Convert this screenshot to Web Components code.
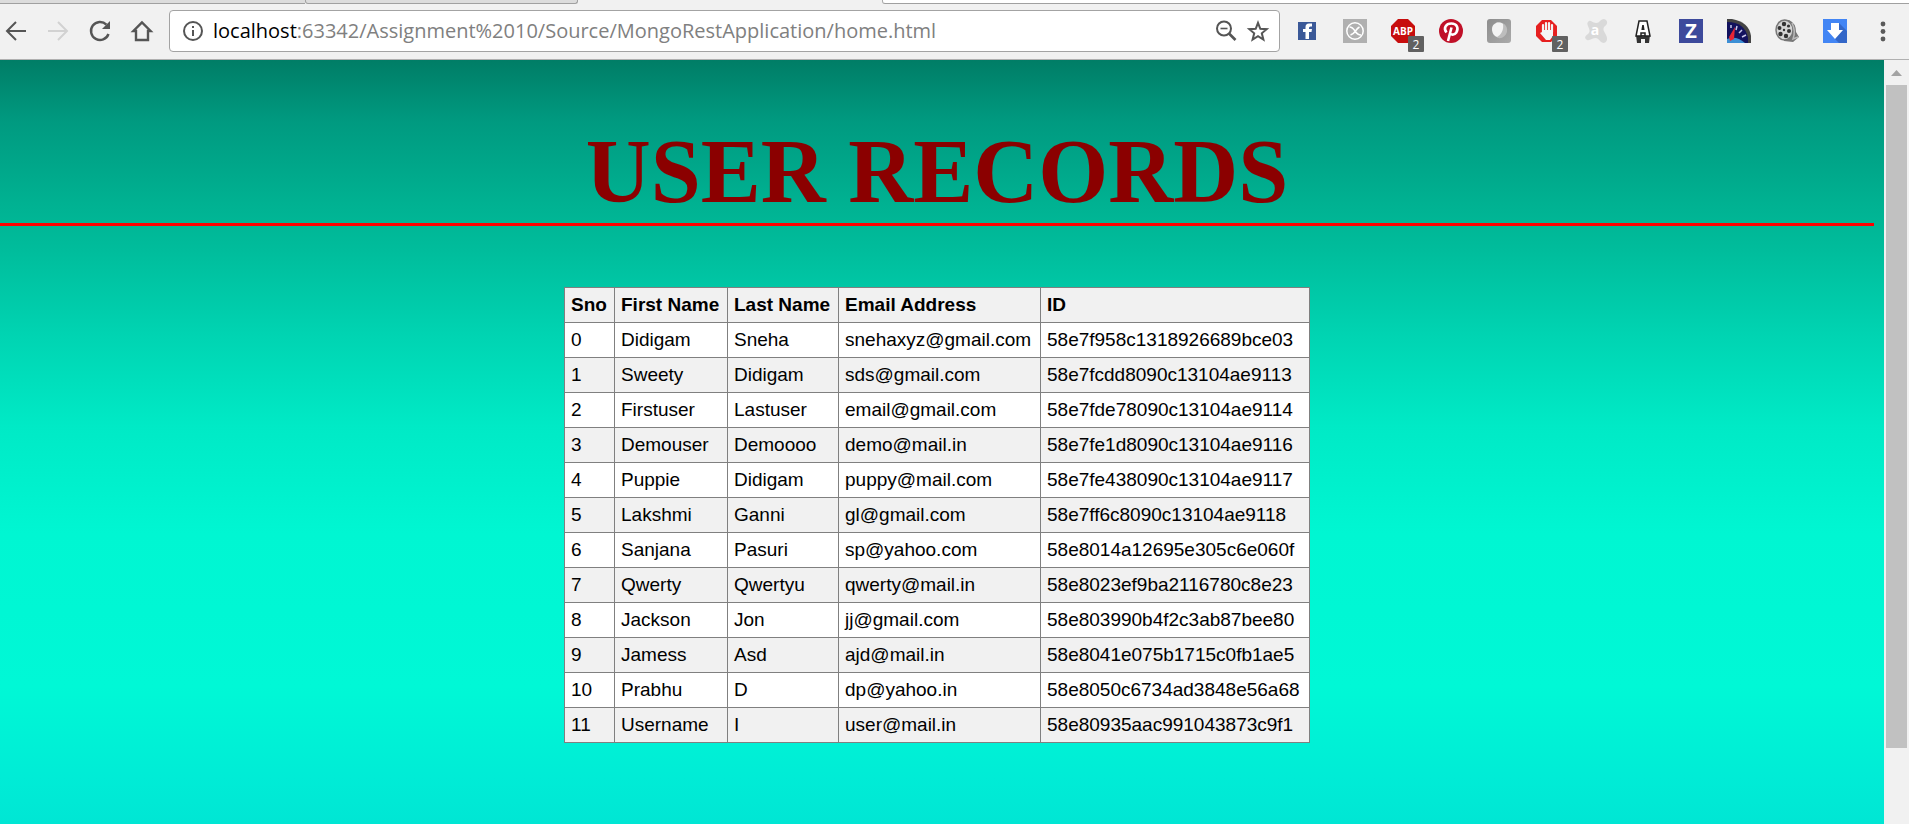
<!DOCTYPE html>
<html lang="en">
<head>
<meta charset="utf-8">
<title>User Records</title>
<style>
html,body{margin:0;height:100%}
body{font-family:"Liberation Sans",Arial,sans-serif;overflow:hidden}
</style>
</head>
<body>
<browser-window>
  <browser-toolbar slot="toolbar" host="localhost" path=":63342/Assignment%2010/Source/MongoRestApplication/home.html"></browser-toolbar>
  <records-page>
    <span slot="title">USER RECORDS</span>
    <records-table></records-table>
  </records-page>
</browser-window>
<script>
function define(name, html, setup) {
  customElements.define(name, class extends HTMLElement {
    constructor() {
      super();
      this.attachShadow({ mode: 'open' }).innerHTML = html;
    }
    connectedCallback() { if (setup) setup(this, this.shadowRoot); }
  });
}

define('ext-button', `
<style>
:host{display:block;width:24px;height:24px;position:relative}
button{all:unset;display:block;width:24px;height:24px}
::slotted(svg){display:block;width:24px;height:24px;overflow:visible}
.badge{position:absolute;left:17px;top:17px;width:16px;height:16px;background:#616161;border-radius:1px;color:#fff;font:12px/17px "Open Sans",sans-serif;text-align:center}
.badge:empty{display:none}
</style>
<button><slot></slot></button><span class="badge"></span>`, (el, root) => {
  root.querySelector('button').setAttribute('aria-label', el.getAttribute('label'));
  root.querySelector('.badge').textContent = el.getAttribute('count') || '';
});

define('browser-toolbar', `
<style>
:host{display:block;background:#f1f1f1}
.tabs{display:grid;grid-template-columns:305px 273px 304px 1fr;height:4px;box-sizing:border-box;background:#f1f1f1}
.tabs i{border-bottom:1px solid #a0a0a0;background:#dcdcdc}
.tabs i:nth-child(2){border-left:1px solid #a0a0a0;border-right:1px solid #a0a0a0;border-radius:0 0 3px 3px;box-sizing:border-box}
.tabs i:nth-child(3){border:0;background:#f1f1f1}
.tabs i:nth-child(4){background:#fff;border-left:1px solid #aaa;border-radius:0 0 0 3px}
.bar{display:flex;align-items:center;box-sizing:border-box;height:56px;padding-bottom:1px;border-bottom:1px solid #b0b0b0}
button{all:unset;display:block}
svg{display:block}
.nav{display:flex;gap:18px;padding:0 15px 0 4px}
.nav svg{width:24px;height:24px}
.address{flex:1;display:flex;align-items:center;gap:8px;box-sizing:border-box;height:42px;border:1px solid #a3a3a3;border-radius:4px;background:#fff;padding:0 9px 0 11px}
.url{flex:1;min-width:0;font:20px/28px "Open Sans","Noto Sans",sans-serif;white-space:nowrap;color:#808080}
.url a{color:inherit;text-decoration:none}
.url b{font-weight:400;color:#000}
.exts{display:flex;gap:24px;padding:0 24px 0 15px}
.menu{padding-right:14px}
</style>
<div class="tabs"><i></i><i></i><i></i><i></i></div>
<div class="bar">
  <div class="nav">
    <button aria-label="Back"><svg viewBox="0 0 24 24" fill="none" stroke="#555" stroke-width="2"><path d="M22 12H4M12 3L3 12l9 9"/></svg></button>
    <button aria-label="Forward"><svg viewBox="0 0 24 24" fill="none" stroke="#d2d2d2" stroke-width="2"><path d="M2 12h18M12 3l9 9-9 9"/></svg></button>
    <button aria-label="Reload"><svg viewBox="0 0 24 24" fill="none" stroke="#555" stroke-width="2.4"><path d="M20.500 15A9 9 0 1 1 18.400 5.600"/><path d="M22 2v8h-8z" fill="#555" stroke="none"/></svg></button>
    <button aria-label="Home"><svg viewBox="0 0 24 24" fill="none" stroke="#555" stroke-width="2.4" ><path d="M12 3.400L3.400 12H6v9h12v-9h2.600z"/></svg></button>
  </div>
  <div class="address">
    <svg width="24" height="24" viewBox="0 0 24 24"><circle cx="12" cy="12" r="9" fill="none" stroke="#555" stroke-width="2"/><path d="M11 7h2v2h-2zM11 11h2v6h-2z" fill="#555"/></svg>
    <div class="url"><a href="#"><b></b><span></span></a></div>
    <button aria-label="Zoom"><svg width="24" height="24" viewBox="0 0 24 24" fill="none" stroke="#555"><circle cx="10" cy="9.500" r="7" stroke-width="2"/><path d="M15 14.500l6.500 6.500" stroke-width="2.600"/><path d="M6.500 9.500h7" stroke-width="1.600"/></svg></button>
    <button aria-label="Bookmark"><svg width="24" height="24" viewBox="0 0 24 24"><path d="M12 3.800l2.300 6 6.400.4-4.900 4.100 1.600 6.200-5.400-3.400-5.400 3.400 1.600-6.200-4.900-4.100 6.400-.4z" fill="none" stroke="#555" stroke-width="2"/></svg></button>
  </div>
  <div class="exts">
    <ext-button label="Facebook"><svg viewBox="0 0 24 24"><path fill="#3b5998" d="M3 3h18v18H3z"/><path fill="#fff" d="M10.500 20v-7H8v-3h2.500V8q0-3.500 3.500-3.500h3v3h-1.600q-1.400 0-1.400 1.500v1h3l-.5 3H14v7z"/></svg></ext-button>
    <ext-button label="Blocker"><svg viewBox="0 0 24 24"><path fill="#b0b0b0" d="M0 0h24v24H0z"/><g fill="none" stroke="#fff" stroke-width="1.500"><circle cx="12" cy="12" r="8.200"/><path d="M6.500 8q3 0 5.500 4t6 4M7.500 16q3-1 5-4t4-4"/></g></svg></ext-button>
    <ext-button label="Adblock Plus" count="2"><svg viewBox="0 0 24 24"><path fill="#c70d0d" d="M7 0h10l7 7v10l-7 7H7l-7-7V7z"/><text x="12" y="16" text-anchor="middle" font-family="Open Sans,sans-serif" font-weight="700" font-size="10" fill="#fff">ABP</text></svg></ext-button>
    <ext-button label="Pinterest"><svg viewBox="0 0 24 24"><circle cx="12" cy="12" r="12" fill="#c01028"/><path d="M7.500 13.500C4 9 7 4.500 12.300 4.500c6 0 7.500 5 5 9-2 3-5.600 2.500-6.300.3M12.500 8.500L9 22" fill="none" stroke="#fff" stroke-width="2.600"/></svg></ext-button>
    <ext-button label="Bubble"><svg viewBox="0 0 24 24"><defs><linearGradient id="g" x2="1" y2="1"><stop stop-color="#8d8d8d"/><stop offset="1" stop-color="#aaa"/></linearGradient></defs><rect width="24" height="24" rx="3" fill="url(#g)"/><path fill="#bdbdbd" d="M9 3.500c7-1 12 3 11 9-1 5-6 8-10 6z"/><path fill="#f3f3f3" d="M5 10c0-6 7-8 11-5 1 6-2 11-6 13-3-1-5-4-5-8z"/></svg></ext-button>
    <ext-button label="AdBlock" count="2"><svg viewBox="0 0 24 24"><path fill="#e62020" d="M7 1h9l6 6v10l-6 6H7l-6-6V7z"/><path d="M8 13V6M11 12V4M14 12V4M17 13V6" fill="none" stroke="#f4f4f4" stroke-width="2.200" stroke-linecap="round"/><path fill="#f4f4f4" d="M7 11h11v6l-3 4h-4l-6-7 2-1z"/></svg></ext-button>
    <ext-button label="Avast"><svg viewBox="0 0 24 24"><path fill="#d9d9d9" d="M6 2c2-1 3 2 7 2 4 0 4-4 8-4 4 1 4 5 1 7-3 3-1 5 1 9 2 4 1 7-2 8-4 0-4-4-8-5-4 0-6 3-9 2-3-2-2-4 1-6 3-3 1-5 0-8-1-2-1-4 1-5z"/><text x="12" y="16" text-anchor="middle" font-family="Open Sans,sans-serif" font-weight="700" font-size="14" fill="#fff">a</text></svg></ext-button>
    <ext-button label="Font tool"><svg viewBox="0 0 24 24"><path fill="#333" d="M5 16h14l-1 8h-4v-4h-4v4H6z"/><path fill="#fff" stroke="#222" stroke-width="1.500" d="M8 2h8l3 15h-5v-3h-4v3H5z"/><path fill="#222" d="M11.200 6h1.600l.8 5h-3.200z"/></svg></ext-button>
    <ext-button label="Zotero"><svg viewBox="0 0 24 24"><path fill="#3d4a9c" d="M0 0h24v24H0z"/><text x="12" y="19" text-anchor="middle" font-family="Open Sans,sans-serif" font-weight="700" font-size="20" fill="#fff">Z</text></svg></ext-button>
    <ext-button label="Speed"><svg viewBox="0 0 24 24"><path fill="#444" d="M0 0h5q17 3 19 17v7H0z"/><path fill="#12125e" d="M0 3q18 0 21 16v5H0z"/><path fill="#3c8fd5" d="M0 24v-4q9-4 18 4z"/><path d="M4 6v3M10 7l-1 4M15 11l-3 3M19 16l-4 2" stroke="#c8c8e8" stroke-width="1.500"/><path fill="#e52535" d="M8 8l-1 12-4 2-1-4z"/></svg></ext-button>
    <ext-button label="Video"><svg viewBox="0 0 24 24"><path fill="#777" d="M8 1h6q7 3 7 12l3 5-6 5-9-1z"/><ellipse cx="9.500" cy="11" rx="8.500" ry="10" fill="#d4d4d4" stroke="#777" stroke-width="1.500"/><g fill="#333"><circle cx="9" cy="5" r="2.200"/><circle cx="4.500" cy="9" r="2"/><circle cx="5.500" cy="15" r="2.200"/><circle cx="11" cy="17" r="2.200"/><circle cx="14" cy="12" r="2"/><circle cx="13.500" cy="7" r="1.600"/><circle cx="9" cy="11" r="1.200"/></g><path d="M17 4q4 8 1 16l5-2" fill="none" stroke="#bbb" stroke-width="1.500"/></svg></ext-button>
    <ext-button label="Downloader"><svg viewBox="0 0 24 24"><path fill="#4285f4" d="M0 0h24v24H0z"/><path fill="#3367c8" d="M16 4l8 8v12H16l-4-4z"/><path fill="#fff" d="M8 4h8v7h4l-8 9-8-9h4z"/></svg></ext-button>
  </div>
  <button class="menu" aria-label="Menu"><svg width="24" height="24" viewBox="0 0 24 24" fill="#5a5a5a"><circle cx="12" cy="5" r="2.400"/><circle cx="12" cy="12.500" r="2.400"/><circle cx="12" cy="20" r="2.400"/></svg></button>
</div>`, (el, root) => {
  root.querySelector('.url b').textContent = el.getAttribute('host');
  root.querySelector('.url span').textContent = el.getAttribute('path');
});

define('browser-window', `
<style>
:host{display:flex;flex-direction:column;height:100vh}
main{flex:1;min-height:0;display:flex}
.view{flex:1;overflow:hidden}
.view ::slotted(*){min-height:100%}
.scroll{width:25px;box-sizing:border-box;background:#f1f1f1;display:flex;flex-direction:column;align-items:stretch;padding:0 2px}
.scroll svg{display:block;width:21px;height:25px}
.thumb{flex:663;background:#c1c1c1}
.rest{flex:76}
</style>
<slot name="toolbar"></slot>
<main><div class="view"><slot></slot></div>
<div class="scroll"><svg viewBox="0 0 21 25"><path d="M5 16l5.500-6 5.500 6z" fill="#a3a3a3"/></svg><div class="thumb"></div><div class="rest"></div></div></main>`);

define('records-page', `
<style>
:host{display:block;box-sizing:border-box;min-height:100%;background:linear-gradient(180deg,#007d66 0,#009a80 8%,#00b292 19%,#00bd9c 25%,#00d4b2 36%,#00eac6 48%,#00f6d2 62%,#00f8d6 82%,#00ecd6 94%,#00e6d4 100%);padding:60px 10px 0 0}
header{border-bottom:3px solid #f00;text-align:center}
h1{margin:0;font:700 90px/103px "Liberation Serif","Times New Roman",serif;color:#8b0000}
.content{display:flex;justify-content:center;padding-top:61px}
</style>
<header><h1><slot name="title"></slot></h1></header>
<div class="content"><slot></slot></div>`);

const columns = [['Sno', 50], ['First Name', 113], ['Last Name', 111], ['Email Address', 202], ['ID', 269]];
const records = [
  ['0', 'Didigam', 'Sneha', 'snehaxyz@gmail.com', '58e7f958c1318926689bce03'],
  ['1', 'Sweety', 'Didigam', 'sds@gmail.com', '58e7fcdd8090c13104ae9113'],
  ['2', 'Firstuser', 'Lastuser', 'email@gmail.com', '58e7fde78090c13104ae9114'],
  ['3', 'Demouser', 'Demoooo', 'demo@mail.in', '58e7fe1d8090c13104ae9116'],
  ['4', 'Puppie', 'Didigam', 'puppy@mail.com', '58e7fe438090c13104ae9117'],
  ['5', 'Lakshmi', 'Ganni', 'gl@gmail.com', '58e7ff6c8090c13104ae9118'],
  ['6', 'Sanjana', 'Pasuri', 'sp@yahoo.com', '58e8014a12695e305c6e060f'],
  ['7', 'Qwerty', 'Qwertyu', 'qwerty@mail.in', '58e8023ef9ba2116780c8e23'],
  ['8', 'Jackson', 'Jon', 'jj@gmail.com', '58e803990b4f2c3ab87bee80'],
  ['9', 'Jamess', 'Asd', 'ajd@mail.in', '58e8041e075b1715c0fb1ae5'],
  ['10', 'Prabhu', 'D', 'dp@yahoo.in', '58e8050c6734ad3848e56a68'],
  ['11', 'Username', 'I', 'user@mail.in', '58e80935aac991043873c9f1']
];
define('records-table', `
<style>
:host{display:block}
table{border-collapse:collapse;font:19px/22px "Liberation Sans",Arial,sans-serif;color:#000}
th,td{border:1px solid #808080;padding:6px;text-align:left;background:#fff;white-space:nowrap}
tr:nth-child(odd)>*{background:#f1f1f1}
</style>
<table></table>`, (el, root) => {
  const row = (cells, tag) => '<tr>' + cells.map(c => `<${tag}>${c}</${tag}>`).join('') + '</tr>';
  root.querySelector('table').innerHTML =
    '<colgroup>' + columns.map(c => `<col style="width:${c[1]}px">`).join('') + '</colgroup>' +
    '<tbody>' + row(columns.map(c => c[0]), 'th') + records.map(r => row(r, 'td')).join('') + '</tbody>';
});
</script>
</body>
</html>
